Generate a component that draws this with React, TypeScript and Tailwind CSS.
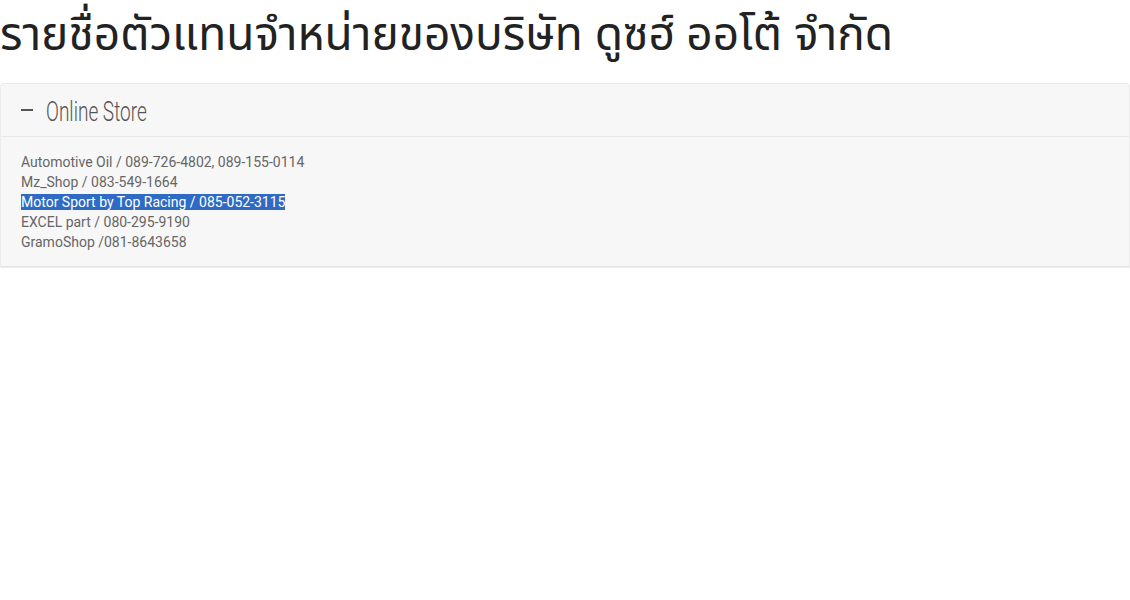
const STORES = [
  "Automotive Oil / 089-726-4802, 089-155-0114",
  "Mz_Shop / 083-549-1664",
  "Motor Sport by Top Racing / 085-052-3115",
  "EXCEL part / 080-295-9190",
  "GramoShop /081-8643658",
];

export default function App() {
  return (
    <div className="h-[600px] w-[1130px] overflow-hidden bg-white">
      <h1 className="pt-[2px] text-[46px] leading-[60px] font-normal whitespace-nowrap text-[#222] [font-family:'Noto_Sans','Noto_Sans_Thai','DejaVu_Sans',sans-serif]">
        รายชื่อตัวแทนจำหน่ายของบริษัท ดูซฮ์ ออโต้ จำกัด
      </h1>

      <div className="mt-[21px] w-[1130px] rounded-t-[3px] border border-[#ececec] bg-[#f7f7f7]">
        {/* Panel heading */}
        <div className="flex h-[53px] items-center border-b border-[#e8e8e8] px-[20px]">
          <span className="mr-[13px] h-[2px] w-[12px] bg-[#555]" />
          <span className="mt-[3px] inline-block origin-left scale-x-[0.68] text-[28px] leading-none font-light text-[#555] [font-family:Roboto,sans-serif]">
            Online Store
          </span>
        </div>

        {/* Panel body */}
        <div className="h-[130px] border-b border-[#e6e6e6] px-[20px] pt-[15px] text-[14px] leading-[20px] text-[#666] [font-family:Roboto,sans-serif]">
          {STORES.map((s, i) =>
            i === 2 ? (
              <div key={s}>
                <span className="bg-[#2f6bc4] text-white">{s}</span>
              </div>
            ) : (
              <div key={s}>{s}</div>
            )
          )}
        </div>
      </div>
    </div>
  );
}
